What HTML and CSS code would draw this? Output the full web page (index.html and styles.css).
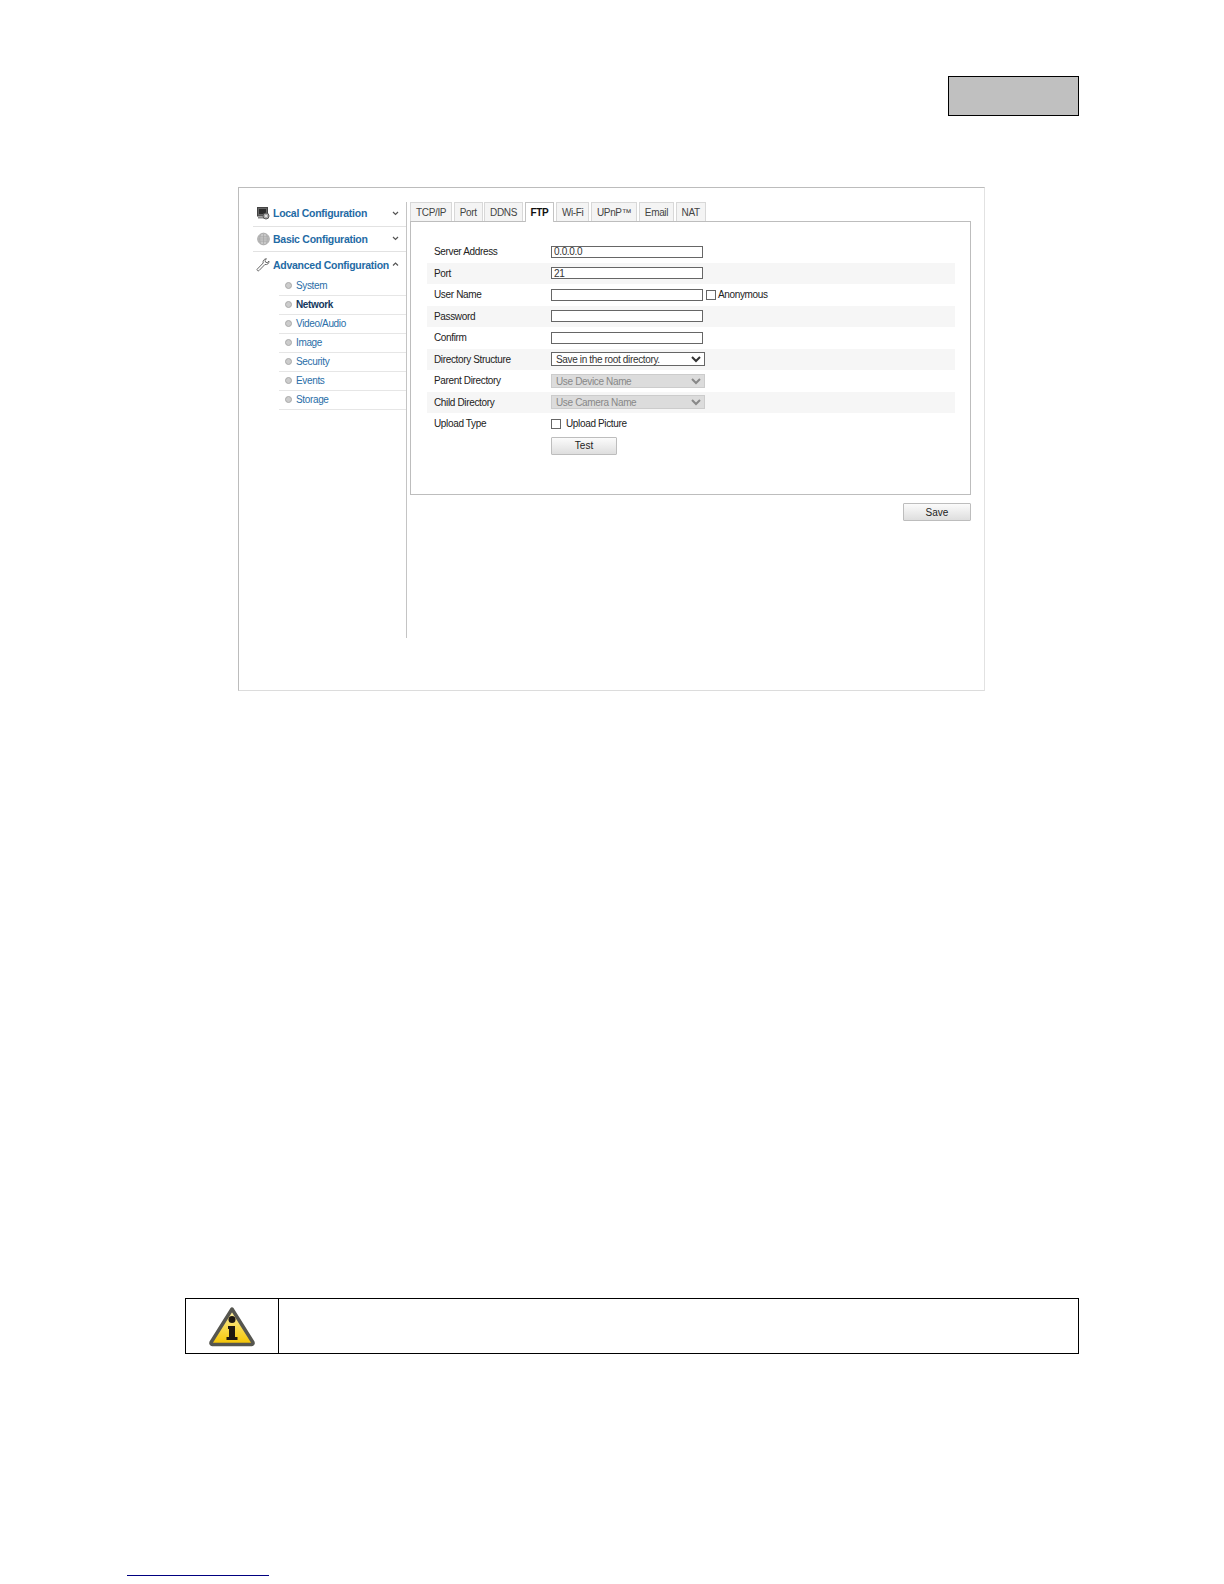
FILE: index.html
```html
<!DOCTYPE html>
<html lang="en">
<head>
<meta charset="utf-8">
<title>FTP</title>
<link rel="stylesheet" href="styles.css">
</head>
<body>
<div class="graybox"></div>
<div class="frame">
  <nav class="side">
    <div class="head">
      <svg class="hicon" width="14" height="14" viewBox="0 0 14 14"><rect x="1.500" y="1.500" width="10" height="8.500" fill="#666" stroke="#444"/><rect x="3" y="3" width="7" height="5" fill="#2c2c2c"/><rect x="2" y="11" width="7" height="1.500" fill="#888"/><circle cx="10" cy="10" r="3" fill="#aaa" stroke="#555"/><circle cx="10" cy="10" r="1" fill="#eee"/></svg>
      <span class="htext">Local Configuration</span>
      <svg class="chev" width="7" height="5" viewBox="0 0 7 5"><path d="M1 1l2.500 2.500L6 1" fill="none" stroke="#555" stroke-width="1.200"/></svg>
    </div>
    <div class="head">
      <svg class="hicon" width="14" height="14" viewBox="0 0 14 14"><circle cx="7.500" cy="7" r="5.800" fill="#c9c9c9" stroke="#a8a8a8"/><path d="M2.500 4.800h10M2 7h11M2.500 9.200h10M7.500 1.500v11M4.800 2.200c-1.500 3-1.500 6.600 0 9.600M10.200 2.200c1.500 3 1.500 6.600 0 9.600" fill="none" stroke="#a5a5a5" stroke-width=".7"/></svg>
      <span class="htext">Basic Configuration</span>
      <svg class="chev" width="7" height="5" viewBox="0 0 7 5"><path d="M1 1l2.500 2.500L6 1" fill="none" stroke="#555" stroke-width="1.200"/></svg>
    </div>
    <div class="head open">
      <svg class="hicon hicon-wide" width="15" height="14" viewBox="0 0 15 14"><path d="M1.200 11.200l6-6.200c-.6-2 .6-4 3.200-4.300L9 2.600l.6 1.600 1.600.5 1.800-1.600c.2 2.400-1.900 4-4.100 3.400l-5.900 6.100c-.9.8-2.600-.5-1.800-1.400z" fill="#fff" stroke="#666" stroke-width="1"/></svg>
      <span class="htext">Advanced Configuration</span>
      <svg class="chev" width="7" height="5" viewBox="0 0 7 5"><path d="M1 3.500L3.500 1 6 3.500" fill="none" stroke="#555" stroke-width="1.200"/></svg>
    </div>
    <ul class="subs">
      <li class="sub"><span class="dot"></span>System</li>
      <li class="sub current"><span class="dot"></span>Network</li>
      <li class="sub"><span class="dot"></span>Video/Audio</li>
      <li class="sub"><span class="dot"></span>Image</li>
      <li class="sub"><span class="dot"></span>Security</li>
      <li class="sub"><span class="dot"></span>Events</li>
      <li class="sub"><span class="dot"></span>Storage</li>
    </ul>
  </nav>
  <main class="main">
    <div class="tabs">
      <span class="tab">TCP/IP</span>
      <span class="tab">Port</span>
      <span class="tab">DDNS</span>
      <span class="tab active">FTP</span>
      <span class="tab">Wi-Fi</span>
      <span class="tab">UPnP™</span>
      <span class="tab">Email</span>
      <span class="tab">NAT</span>
    </div>
    <div class="panel">
      <div class="row"><label class="lab">Server Address</label><input class="inp" value="0.0.0.0"></div>
      <div class="row"><label class="lab">Port</label><input class="inp" value="21"></div>
      <div class="row"><label class="lab">User Name</label><input class="inp"><input type="checkbox" class="chk chk-anon"><span>Anonymous</span></div>
      <div class="row"><label class="lab">Password</label><input class="inp"></div>
      <div class="row"><label class="lab">Confirm</label><input class="inp"></div>
      <div class="row"><label class="lab">Directory Structure</label><select class="sel"><option>Save in the root directory.</option></select></div>
      <div class="row"><label class="lab">Parent Directory</label><select class="sel" disabled><option>Use Device Name</option></select></div>
      <div class="row"><label class="lab">Child Directory</label><select class="sel" disabled><option>Use Camera Name</option></select></div>
      <div class="row"><label class="lab">Upload Type</label><input type="checkbox" class="chk chk-up"><span>Upload Picture</span></div>
      <div class="row"><span class="lab"></span><button class="btn btn-test">Test</button></div>
    </div>
    <div class="actions"><button class="btn btn-save">Save</button></div>
  </main>
</div>
<div class="note">
  <div class="note-icon">
    <svg width="48" height="41" viewBox="0 0 48 41">
      <defs><linearGradient id="yel" x1="0" y1="0" x2="0" y2="1"><stop offset="0" stop-color="#f8eeb0"/><stop offset=".55" stop-color="#f8d94a"/><stop offset="1" stop-color="#f4c300"/></linearGradient></defs>
      <path d="M24 3L45 36.500a1.500 1.500 0 0 1-1.300 2H4.300a1.500 1.500 0 0 1-1.300-2z" fill="url(#yel)" stroke="#56564f" stroke-width="3.500" stroke-linejoin="round"/>
      <circle cx="24" cy="13.500" r="3.500" fill="#1d1710"/>
      <path d="M20 20h7v11h2.500v3h-11v-3H21v-8h-1z" fill="#1d1710"/>
    </svg>
  </div>
  <div class="note-body"></div>
</div>
<div class="footline"></div>
</body>
</html>
```
FILE: styles.css
```css
* { box-sizing: border-box; }
html, body { margin: 0; padding: 0; background: #fff; }
body { height: 1584px; overflow: hidden; font-family: "Liberation Sans", Arial, sans-serif; font-size: 10px; letter-spacing: -.35px; color: #222; }

.graybox { width: 131px; height: 40px; margin: 76px 0 0 948px; background: #c0c0c0; border: 1px solid #000; }

.frame {
  width: 747px; height: 504px; margin: 71px 0 0 238px; padding-top: 14px;
  display: flex; align-items: flex-start;
  border: 1px solid #bcbcbc; border-right-color: #e2e2e2; border-bottom-color: #dcdcdc;
}

.side { width: 168px; height: 436px; padding-left: 14px; border-right: 1px solid #c4c4c4; }
.head { height: 25.500px; display: flex; align-items: center; border-bottom: 1px solid #e2e2e2; padding-left: 2px; }
.head:first-child { margin-top: -1px; }
.head.open { border-bottom: 0; height: 25px; }
.hicon { flex: none; margin: 0 3px 0 1px; }
.hicon-wide { margin: 0 2px 0 1px; }
.htext { flex: 1; font-size: 10.500px; letter-spacing: -.27px; font-weight: bold; color: #1f6ba5; white-space: nowrap; }
.chev { flex: none; margin-right: 7px; }
.subs { list-style: none; margin: 0 0 0 26px; padding: 0; }
.sub { height: 19px; display: flex; align-items: center; color: #2a6ea8; border-bottom: 1px solid #e6e6e6; padding-bottom: 1px; }
.sub.current { color: #14385e; font-weight: bold; }
.dot { width: 7px; height: 7px; margin: 0 4px 0 6px; border-radius: 50%; background: #ccc; border: 1px solid #aaa; }

.main { width: 561px; margin-left: 3px; }
.tabs { display: flex; height: 20px; position: relative; z-index: 1; }
.tab {
  height: 19px; padding: 0 5px; margin-right: 1.500px; display: flex; align-items: center;
  background: #f4f4f4; border: 1px solid #d8d8d8; border-bottom: 0; color: #444; white-space: nowrap;
}
.tab.active { height: 20px; background: #fff; border-color: #c4c4c4; color: #111; font-weight: bold; }

.panel { height: 274px; margin-top: -1px; padding: 19px 15px 0 16px; border: 1px solid #bdbdbd; }
.row { height: 21.500px; display: flex; align-items: center; padding-left: 7px; }
.row:nth-child(even) { background: #f6f6f6; }
.row:last-child { background: none; height: 22px; }
.lab { width: 117px; flex: none; color: #222; }

.inp { width: 152px; height: 12px; margin: 0; padding: 0 2px; border: 1px solid #666; background: #fff; font: 10px "Liberation Sans", Arial, sans-serif; letter-spacing: -.35px; color: #333; border-radius: 0; outline: 0; }
.sel { width: 154px; height: 14px; margin: 0; padding: 0; border: 1px solid #666; border-radius: 0; background-color: #fff; font: 10px "Liberation Sans", Arial, sans-serif; letter-spacing: -.35px; color: #333; }
.sel:disabled { background-color: #dcdcdc; border-color: #ccc; color: #888; opacity: 1; }
.chk { appearance: none; width: 10px; height: 10px; margin: 0; border: 1px solid #666; border-radius: 0; background: #fff; flex: none; }
.chk-anon { margin: 0 2px 0 3px; }
.chk-up { margin-right: 5px; }

.btn { margin: 0; padding: 0; border: 1px solid #bdbdbd; border-radius: 1px; background: linear-gradient(#fbfbfb, #dedede); font: 10px "Liberation Sans", Arial, sans-serif; letter-spacing: 0; color: #222; }
.btn-test { width: 66px; height: 18px; }
.btn-save { width: 68px; height: 18px; }
.actions { display: flex; justify-content: flex-end; margin-top: 8px; }

.note { width: 894px; height: 56px; margin: 607px 0 0 185px; display: flex; border: 1px solid #000; }
.note-icon { width: 93px; flex: none; display: flex; align-items: center; justify-content: center; border-right: 1px solid #000; }
.note-body { flex: 1; }

.footline { width: 142px; height: 1px; margin: 221px 0 0 127px; background: #000080; }
```
